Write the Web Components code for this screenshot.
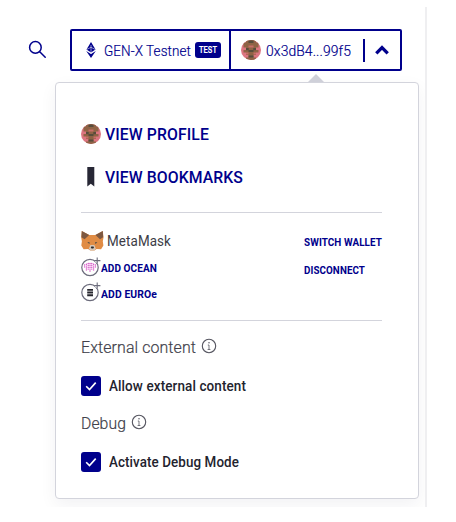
<!DOCTYPE html>
<html lang="en"><head><meta charset="utf-8"><title>Wallet menu</title>
<style>html,body{margin:0;background:#fff}body{width:456px;height:522px;overflow:hidden}</style></head>
<body><wallet-page></wallet-page>
<script>
const define = (name, html, init) => {
  const t = document.createElement('template'); t.innerHTML = html;
  customElements.define(name, class extends HTMLElement {
    connectedCallback() {
      if (this.shadowRoot) return;
      this.attachShadow({mode:'open'}).append(t.content.cloneNode(true));
      if (init) init(this, this.shadowRoot);
    }
  });
};

/* Condensed text label: glyphs are narrowed to fill the width in "w". */
define('fit-text', `<style>:host{display:block;flex:none;white-space:nowrap;font-family:Roboto,"Liberation Sans",sans-serif;line-height:20px;height:20px}span{display:inline-block;transform-origin:0 50%;letter-spacing:.1px}</style><span><slot></slot></span>`, (el, root) => {
  const w = +el.getAttribute('w'), s = root.querySelector('span');
  el.style.width = w + 'px';
  s.style.transform = `scaleX(${w / s.getBoundingClientRect().width})`;
});

define('user-avatar', `<style>:host{display:block;flex:none;width:20px;height:20px}svg{display:block}</style><svg width="20" height="20" viewBox="0 0 20 20"><defs><clipPath id="c"><circle cx="10" cy="10" r="10"/></clipPath></defs><g clip-path="url(#c)"><path fill="#dc7580" d="M0 0h20v20H0z"/><path fill="#8f6345" d="M5 0h10v2.500h2.500v5H15V10h2.500v2.500H15V15h-2.500v2.500H15V20H5v-2.500h2.500V15H5v-2.500H2.500V10H5V7.500H2.500v-5H5Z"/><path fill="#574c3c" d="M7.500 0.500h5v2.500h-5zM5 8h2.700v2.200H5zM12.300 8H15v2.200h-2.700zM7.500 10h5v2h-5zM7.500 15.500h5v2h-5z"/><path fill="#c96d68" d="M7.500 5.500h5v2h-5zM5 12.500h2.500v2H5zM12.500 12.500H15v2h-2.500z"/></g></svg>`);

define('search-icon', `<style>:host{display:block;width:20px;height:20px}svg{display:block}</style><svg width="20" height="20" fill="none" stroke="#00008c" stroke-width="1.5" stroke-linecap="round"><circle cx="7.4" cy="7.4" r="5.8"/><path d="M11.7 11.7 17.2 17.2"/></svg>`);

define('network-bar', `<style>
:host{display:flex;box-sizing:border-box;width:332px;height:42px;border:2px solid #00008c;border-radius:2px;color:#00008c;background:#fff}
div{display:flex;align-items:center;box-sizing:border-box}
.n{width:159px;border-right:2px solid #00008c;padding-left:13px}
.a{padding-left:10px;flex:1}
fit-text{font-size:15px;font-weight:300;-webkit-text-stroke:.2px;padding-top:1px}
.b{width:26px;height:16px;border-radius:3px;background:#00008c;color:#fff;justify-content:center;margin-left:4px}
.b fit-text{font-size:9px;font-weight:500;padding:0}
i{width:1.5px;height:23px;background:#00008c;margin:0 11px 0 12px}
svg{display:block;flex:none}
</style>
<div class="n"><svg width="12" height="16" viewBox="0 0 12 16" fill="#00008c"><path d="M6 0 10.500 7.600 6 10.500 1.500 7.600Z"/><path d="M1.200 9 6 12l4.800-3L6 16Z"/><path d="M6 3v9M2 7.300l4-2 4 2" fill="none" stroke="#fff" stroke-width=".55"/></svg><fit-text w="87" style="margin-left:7px">GEN-X Testnet</fit-text><div class="b"><fit-text w="18">TEST</fit-text></div></div>
<div class="a"><user-avatar></user-avatar><fit-text w="85" style="margin-left:5px">0x3dB4...99f5</fit-text><i style="margin-right:10px"></i><svg width="15" height="12" fill="none" stroke="#00008c" stroke-width="3.3"><path d="M1.300 9.300 7 3.600 12.700 9.300"/></svg></div>`);

define('profile-link', `<style>:host{display:flex;align-items:center;height:20px;color:#00008c}.i{width:20px;height:20px;margin-right:4px}</style><div class="i"><slot name="icon"></slot></div><slot></slot>`);

define('bookmark-icon', `<style>:host{display:block}svg{display:block}</style><svg width="20" height="20"><path d="M6.300 0h7v19.500L9.800 16.800 6.300 19.500Z" fill="#272735"/></svg>`);

define('fox-icon', `<style>:host{display:block;flex:none}svg{display:block}</style><svg width="23" height="20" viewBox="0 0 23 20"><path d="M.8 0 8.200 4h6.200L21.800 0l.7 6.500-.7 3.800.6 4.200-2.300 3.800-4.500-.2-2.200 1.400H9.300l-2.200-1.400-4.500.2L.3 14.500l.6-4.200L.2 6.500Z" fill="#e08c45"/><path d="M.8 0 8.200 4 3.600 8.300.4 6.300ZM21.800 0l-7.400 4 4.600 4.300 3.200-2Z" fill="#7d5841"/><path d="m7.800 17.700 1.600-3.700h3.900l1.600 3.700-1.700 1.800H9.500Z" fill="#d7c7b8"/><path d="m9.800 16.400.5-.9h2.200l.5.9-.8 1.200h-1.600Z" fill="#262b31"/><path d="m6.300 11.800 1.900-.8.600 1.700ZM16.400 11.800l-1.900-.8-.6 1.700Z" fill="#34404a"/></svg>`);

define('token-icon', `<style>:host{display:block;flex:none}svg{display:block}</style><svg width="20" height="20" viewBox="0 0 20 20"><circle cx="9" cy="10.500" r="8.200" fill="#fff" stroke="#6c6c7c" stroke-width="1.200"/><path d="M12.500 0h7.500v7h-3L14 4.500Z" fill="#fff"/><path d="M16.200.5v6.200M13.200 3.600h6.200" stroke="#6c6c7c" stroke-width="1.100"/><g></g></svg>`, (el, root) => {
  const g = root.querySelector('g');
  if (el.getAttribute('kind') === 'ocean') {
    const ext = [[8,11.500],[7.200,13.500],[6.400,13.500],[6.400,15.500],[6.400,13.500],[7.200,13.500],[8,11.500]]; let s='';
    ext.forEach(([a,b],i)=>{for(let y=a;y<=b;y+=1.9)s+=`<circle cx="${3.6+i*1.8}" cy="${y}" r=".72"/>`});
    g.setAttribute('fill','#d44bc4'); g.innerHTML=s;
  } else g.innerHTML='<path d="M6.200 6.900h5.800v1.900H6.200zM6.200 9.600h5.800v1.900H6.200zM6.200 12.300h5.800v1.900H6.200z" fill="#26262e"/>';
});

define('wallet-section', `<style>
:host{display:grid;grid-template-columns:223px 78px;box-sizing:border-box;height:109px;padding-top:18px;border-top:1px solid #d3d4dc;border-bottom:1px solid #d3d4dc;color:#00008c}
.r{display:flex;align-items:center}.m{height:20px;color:#3c3c46}.t{height:20px}
.m fit-text{font-size:14.600px;font-weight:400;margin-left:3px}
fit-text{font-size:11.200px;font-weight:700}
.t fit-text{padding-top:4px}
</style>
<div><div class="r m"><fox-icon></fox-icon><fit-text w="64">MetaMask</fit-text></div>
<div class="r t" style="margin-top:6px"><token-icon kind="ocean"></token-icon><fit-text w="56">ADD OCEAN</fit-text></div>
<div class="r t" style="margin-top:5px"><token-icon kind="euro"></token-icon><fit-text w="56" style="padding-top:5px">ADD EUROe</fit-text></div></div>
<div style="padding-top:2px"><fit-text w="78">SWITCH WALLET</fit-text><fit-text w="61" style="margin-top:8px">DISCONNECT</fit-text></div>`);

define('setting-group', `<style>
:host{display:block;height:76px;color:#41414b}
.h,.c{display:flex;align-items:center;height:20px}
.c{margin-top:19px;color:#23232e}
::slotted([slot=title]){font-size:16.400px;font-weight:300;-webkit-text-stroke:.2px;padding-top:2px}
::slotted([slot=option]){font-size:14.200px;font-weight:500}
.h svg{margin:-2px 0 0 5px}.k{display:flex;width:20px;height:20px;border-radius:3px;background:#00008c;margin-right:8px}
</style><div class="h"><slot name="title"></slot><svg width="16" height="16" fill="none" stroke="#555560"><circle cx="8" cy="8" r="6.700" stroke-width="1.100"/><path d="M8 7v4.500M6.600 11.500h2.800M6.800 7H8" stroke-width=".8"/><circle cx="8" cy="4.800" r=".75" fill="#555560" stroke="none"/></svg></div>
<div class="c"><div class="k"><svg width="20" height="20" fill="none" stroke="#fff" stroke-width="1.600"><path d="m5.200 10.200 3.300 3.400 6.200-7"/></svg></div><slot name="option"></slot></div>`);

define('wallet-panel', `<style>
:host{display:block;position:relative;box-sizing:border-box;width:364px;height:417px;border:1px solid #d3d4dc;border-radius:4px;background:#fff;padding:41px 36px 0 25px;box-shadow:0 6px 17px rgba(20,20,60,.055)}
.caret{position:absolute;left:252px;top:-9px;width:16px;height:8px;background:#cfd0d9;clip-path:polygon(50% 0,100% 100%,0 100%)}
profile-link fit-text{font-size:16.700px;font-weight:500;padding-top:2px}
profile-link+profile-link{margin:23px 0 25px}
</style><div class="caret"></div>
<profile-link><user-avatar slot="icon"></user-avatar><fit-text w="104">VIEW PROFILE</fit-text></profile-link>
<profile-link><bookmark-icon slot="icon"></bookmark-icon><fit-text w="138">VIEW BOOKMARKS</fit-text></profile-link>
<wallet-section></wallet-section>
<setting-group style="margin-top:16px"><fit-text slot="title" w="115">External content</fit-text><fit-text slot="option" w="137">Allow external content</fit-text></setting-group>
<setting-group><fit-text slot="title" w="45">Debug</fit-text><fit-text slot="option" w="130">Activate Debug Mode</fit-text></setting-group>`);

define('wallet-page', `<style>
:host{display:block;padding-top:7px}
main{box-sizing:border-box;width:427px;height:500px;border-right:2px solid #efeff1;overflow:hidden;padding-top:22px}
header{display:flex;padding-left:28px}
search-icon{margin:11px 22px 0 0}
wallet-panel{margin:11px 0 0 55px}
</style><main><header><search-icon></search-icon><network-bar></network-bar></header><wallet-panel></wallet-panel></main>`);
</script></body></html>
